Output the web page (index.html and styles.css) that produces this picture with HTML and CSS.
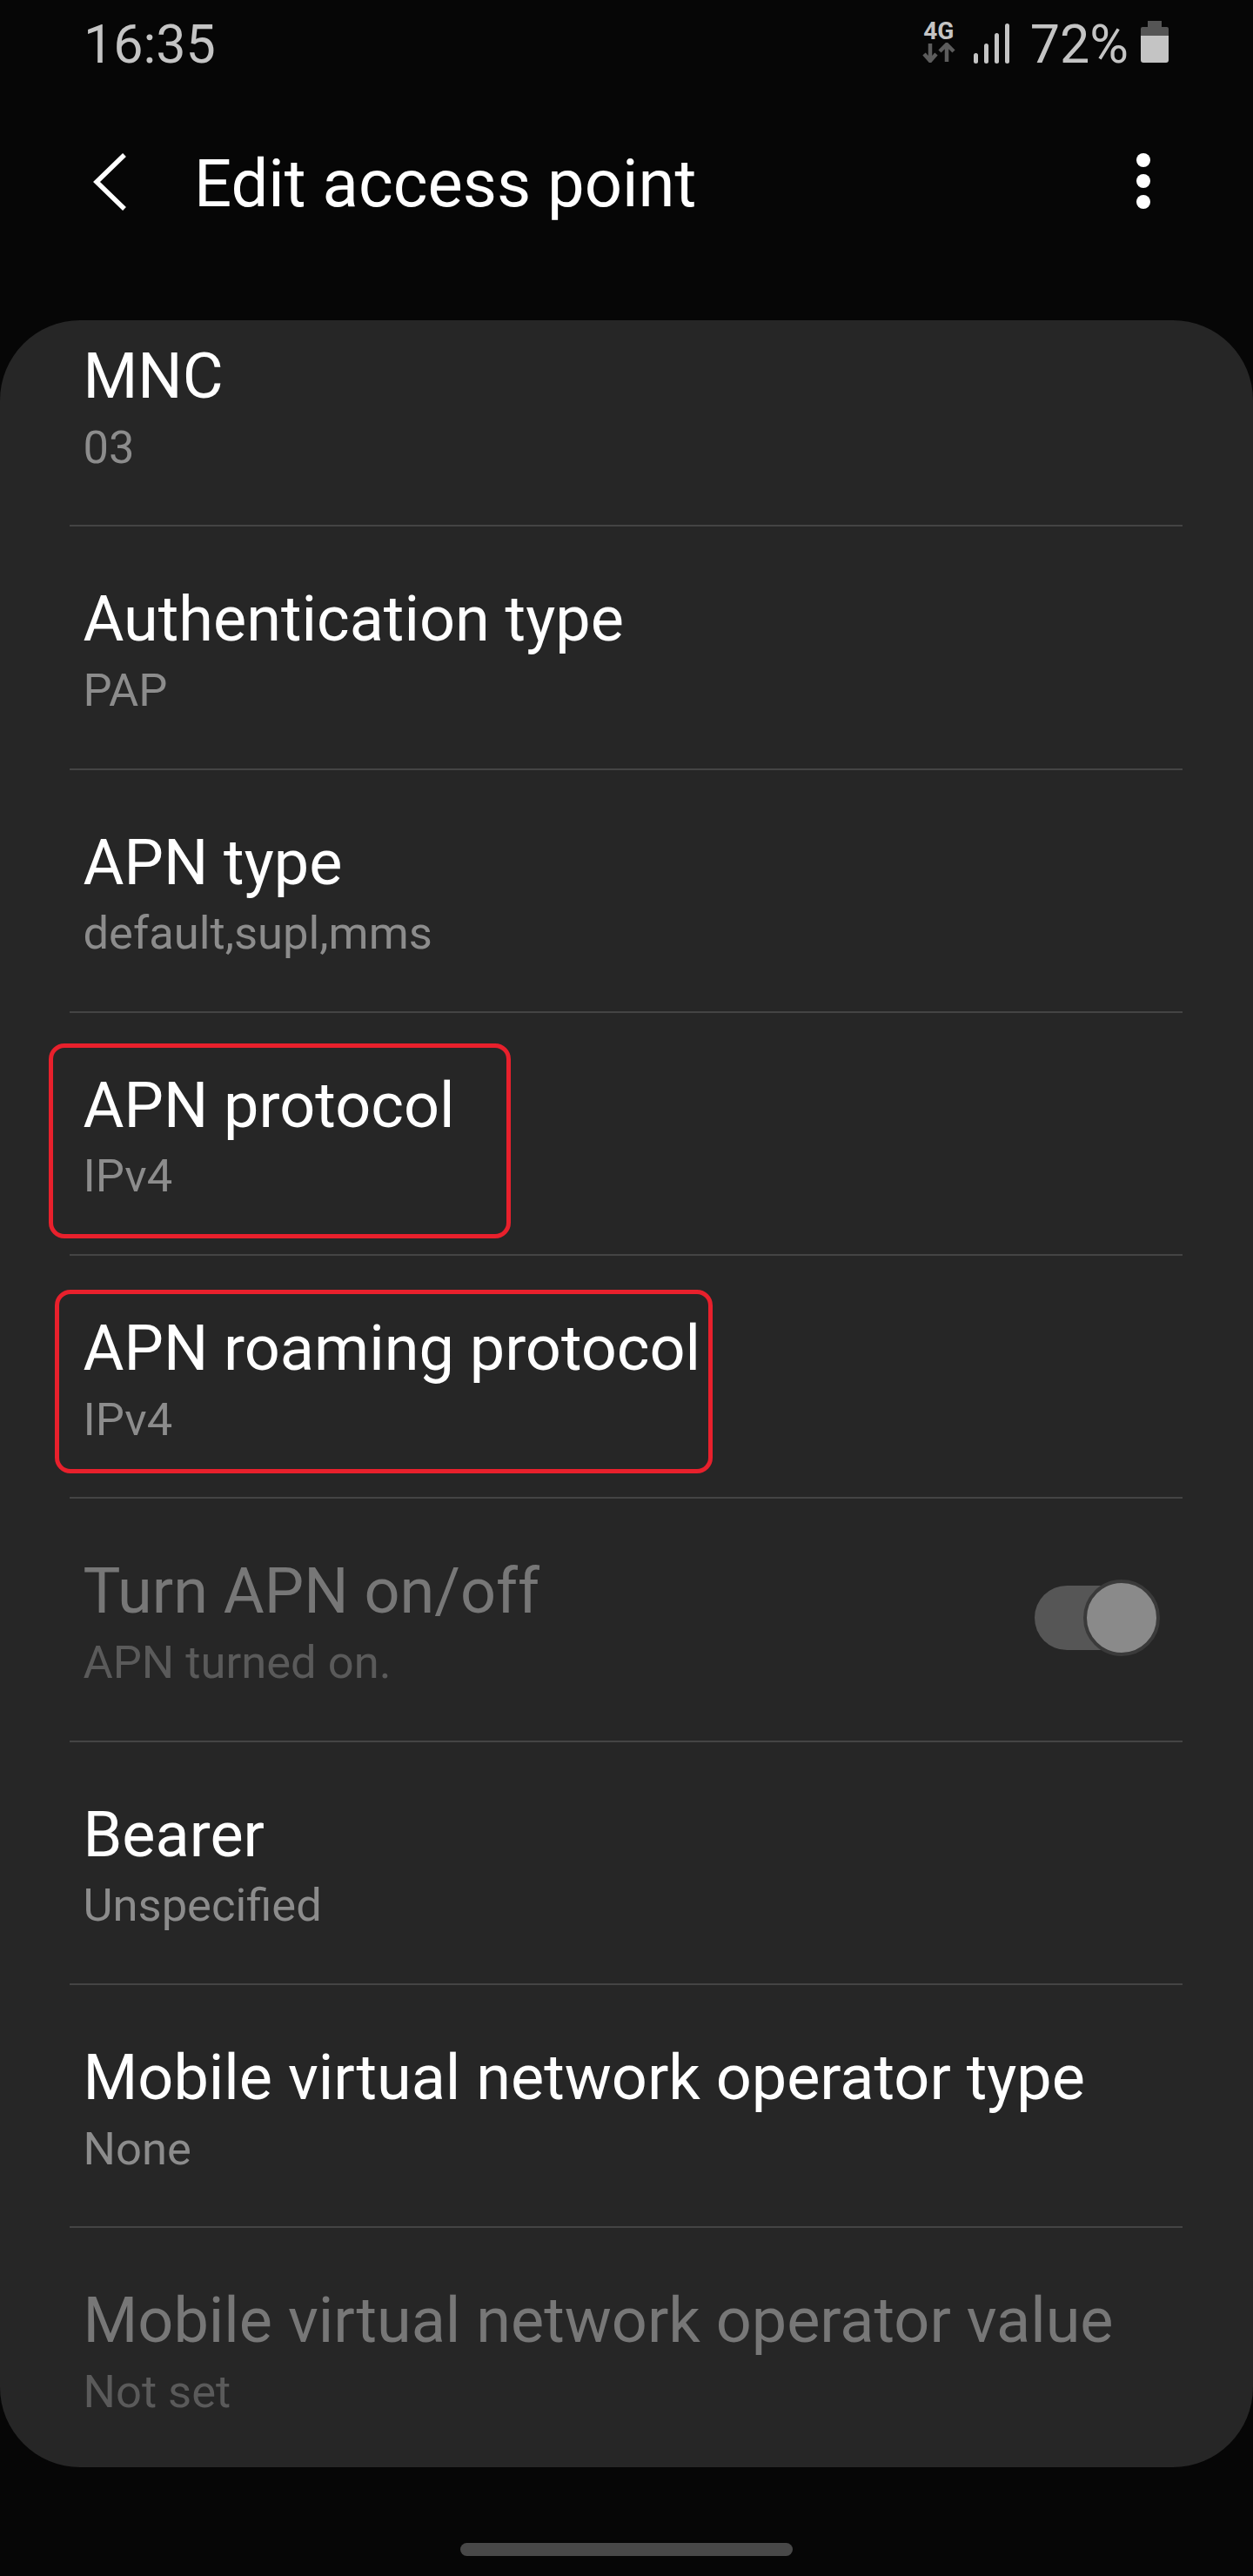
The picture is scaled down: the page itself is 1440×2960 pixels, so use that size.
FILE: index.html
```html
<!DOCTYPE html>
<html lang="en">
<head>
  <meta charset="UTF-8">
  <title>Edit access point</title>
  <link rel="stylesheet" href="styles.css">
</head>
<body>
  <div class="status">
    <span class="time">16:35</span>
    <div class="status-right">
      <div class="net">
        <span class="net-label">4G</span>
        <svg class="net-arrows" width="38" height="23" viewBox="0 0 38 23">
          <path d="M9 1v19M2 13l7 8 7-8" fill="none" stroke="#5c5c5c" stroke-width="4.5"/>
          <path d="M28 22V3M20 10l8-8 8 8" fill="none" stroke="#5c5c5c" stroke-width="4.5"/>
        </svg>
      </div>
      <svg class="signal" width="41" height="46" viewBox="0 0 41 46">
        <rect x="0" y="34" width="5" height="12" rx="2.5" fill="#c4c4c4"/>
        <rect x="12" y="23" width="5" height="23" rx="2.5" fill="#c4c4c4"/>
        <rect x="24" y="11" width="5" height="35" rx="2.5" fill="#c4c4c4"/>
        <rect x="36" y="0" width="5" height="46" rx="2.5" fill="#c4c4c4"/>
      </svg>
      <span class="percent">72%</span>
      <svg class="battery" width="32" height="48" viewBox="0 0 32 48">
        <path d="M8 0h16v7h6a2 2 0 0 1 2 2v8H0V9a2 2 0 0 1 2-2h6z" fill="#555"/>
        <path d="M0 17h32v28a3 3 0 0 1-3 3H3a3 3 0 0 1-3-3z" fill="#c4c4c4"/>
      </svg>
    </div>
  </div>

  <div class="appbar">
    <svg class="back" width="40" height="66" viewBox="0 0 40 66">
      <path d="M36 2L4 33l32 31" fill="none" stroke="#fff" stroke-width="5.5"/>
    </svg>
    <span class="appbar-title">Edit access point</span>
    <div class="more"><span></span><span></span><span></span></div>
  </div>

  <div class="card">
    <div class="row">
      <div class="row-title">MNC</div>
      <div class="row-sub">03</div>
    </div>
    <div class="row">
      <div class="row-title">Authentication type</div>
      <div class="row-sub">PAP</div>
    </div>
    <div class="row">
      <div class="row-title">APN type</div>
      <div class="row-sub">default,supl,mms</div>
    </div>
    <div class="row">
      <div class="row-title">APN protocol</div>
      <div class="row-sub">IPv4</div>
      <div class="mark mark-protocol"></div>
    </div>
    <div class="row">
      <div class="row-title">APN roaming protocol</div>
      <div class="row-sub">IPv4</div>
      <div class="mark mark-roaming"></div>
    </div>
    <div class="row row-switch disabled">
      <div>
        <div class="row-title">Turn APN on/off</div>
        <div class="row-sub">APN turned on.</div>
      </div>
      <div class="toggle"><span class="knob"></span></div>
    </div>
    <div class="row">
      <div class="row-title">Bearer</div>
      <div class="row-sub">Unspecified</div>
    </div>
    <div class="row">
      <div class="row-title">Mobile virtual network operator type</div>
      <div class="row-sub">None</div>
    </div>
    <div class="row disabled">
      <div class="row-title">Mobile virtual network operator value</div>
      <div class="row-sub">Not set</div>
    </div>
  </div>

  <div class="home-pill"></div>
</body>
</html>
```

FILE: styles.css
```css
body {
  margin: 0;
  height: 2960px;
  overflow: hidden;
  background: #060606;
  font-family: Roboto, sans-serif;
  color: #fff;
}

.status {
  display: flex;
  box-sizing: border-box;
  height: 100px;
  padding: 11px 97px 0 96px;
  color: #c4c4c4;
  font-size: 61px;
  line-height: 80px;
}

.status-right {
  display: flex;
  align-items: flex-start;
  margin-left: auto;
}

.net {
  display: flex;
  flex-direction: column;
  align-items: center;
  width: 38px;
  margin: 11px 21px 0 0;
}

.net-label {
  font-size: 28px;
  font-weight: 700;
  line-height: 28px;
}

.net-arrows {
  margin-top: -1px;
}

.signal {
  margin: 16px 24px 0 0;
}

.percent {
  margin-right: 14px;
}

.battery {
  margin-top: 13px;
}

.appbar {
  display: flex;
  align-items: flex-start;
  box-sizing: border-box;
  height: 268px;
  padding: 68px 118px 0 107px;
}

.back {
  margin: 8px 76px 0 0;
}

.appbar-title {
  font-size: 76px;
  line-height: 86px;
}

.more {
  display: flex;
  flex-direction: column;
  gap: 8px;
  margin: 8px 0 0 auto;
}

.more span {
  width: 16px;
  height: 16px;
  border-radius: 50%;
  background: #fff;
}

.card {
  height: 2467px;
  box-sizing: border-box;
  background: #262626;
  border-radius: 92px;
}

.row {
  position: relative;
  margin: 0 81px 0 80px;
  padding: 65px 17px 59.8px 15.5px;
  border-bottom: 2px solid #444;
}

.row:first-child {
  padding-top: 23px;
}

.row:last-child {
  border-bottom: none;
}

.row-switch {
  display: flex;
  justify-content: space-between;
}

.row-title {
  font-size: 72px;
  line-height: 84px;
}

.row-sub {
  margin-top: 8.5px;
  color: #8c8c8c;
  font-size: 52.5px;
  line-height: 60px;
}

.disabled .row-title {
  color: #777;
}

.disabled .row-sub {
  color: #5a5a5a;
}

/* red annotation boxes drawn over the screenshot */
.mark {
  position: absolute;
  box-sizing: border-box;
  border: 5px solid #e8202c;
  border-radius: 18px;
}

.mark-protocol {
  top: 35px;
  left: -24px;
  width: 531px;
  height: 224px;
}

.mark-roaming {
  top: 39px;
  left: -17px;
  width: 756px;
  height: 211px;
}

.toggle {
  position: relative;
  width: 132px;
  height: 74px;
  margin: 34.5px 21px 0 0;
  border-radius: 37px;
  background: #565656;
}

.knob {
  position: absolute;
  top: -7px;
  right: -12px;
  width: 80px;
  height: 80px;
  border: 4px solid #3a3a3a;
  border-radius: 50%;
  background: #8a8a8a;
}

.home-pill {
  width: 382px;
  height: 15px;
  margin: 87px auto 0;
  border-radius: 8px;
  background: #484848;
}
```
